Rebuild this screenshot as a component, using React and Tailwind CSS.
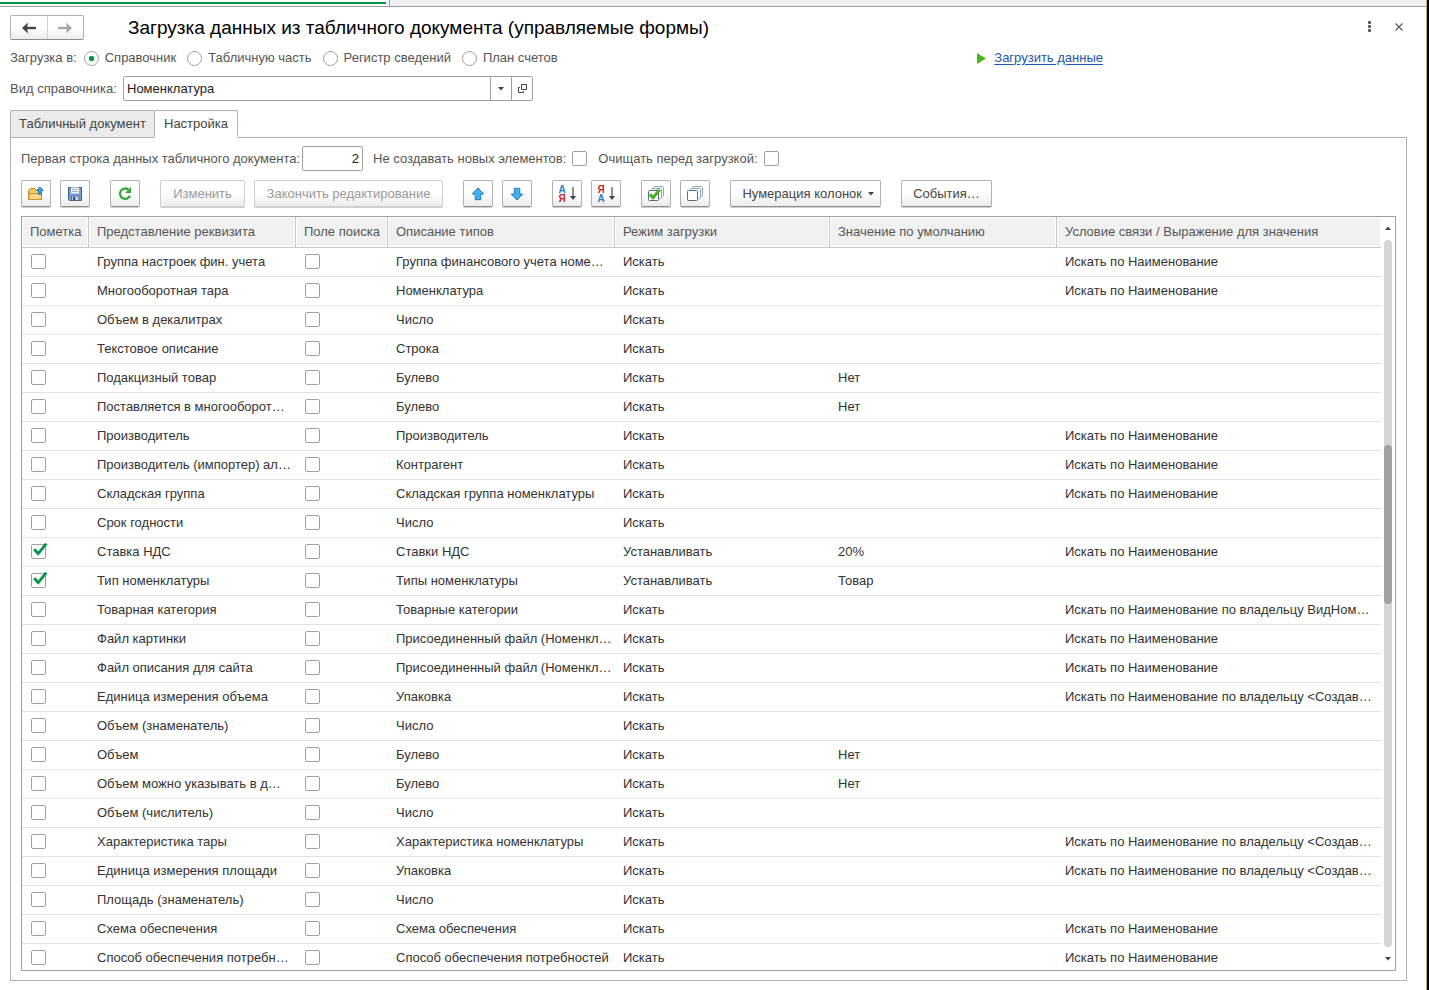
import clsx from 'clsx'

const TARGETS = ['Справочник', 'Табличную часть', 'Регистр сведений', 'План счетов']

const BY_NAME = 'Искать по Наименование'

const ROWS = [
  { name: 'Группа настроек фин. учета', type: 'Группа финансового учета номе…', mode: 'Искать', rule: BY_NAME },
  { name: 'Многооборотная тара', type: 'Номенклатура', mode: 'Искать', rule: BY_NAME },
  { name: 'Объем в декалитрах', type: 'Число', mode: 'Искать' },
  { name: 'Текстовое описание', type: 'Строка', mode: 'Искать' },
  { name: 'Подакцизный товар', type: 'Булево', mode: 'Искать', value: 'Нет' },
  { name: 'Поставляется в многооборот…', type: 'Булево', mode: 'Искать', value: 'Нет' },
  { name: 'Производитель', type: 'Производитель', mode: 'Искать', rule: BY_NAME },
  { name: 'Производитель (импортер) ал…', type: 'Контрагент', mode: 'Искать', rule: BY_NAME },
  { name: 'Складская группа', type: 'Складская группа номенклатуры', mode: 'Искать', rule: BY_NAME },
  { name: 'Срок годности', type: 'Число', mode: 'Искать' },
  { name: 'Ставка НДС', type: 'Ставки НДС', mode: 'Устанавливать', value: '20%', rule: BY_NAME, marked: true },
  { name: 'Тип номенклатуры', type: 'Типы номенклатуры', mode: 'Устанавливать', value: 'Товар', marked: true },
  { name: 'Товарная категория', type: 'Товарные категории', mode: 'Искать', rule: 'Искать по Наименование по владельцу ВидНом…' },
  { name: 'Файл картинки', type: 'Присоединенный файл (Номенкл…', mode: 'Искать', rule: BY_NAME },
  { name: 'Файл описания для сайта', type: 'Присоединенный файл (Номенкл…', mode: 'Искать', rule: BY_NAME },
  { name: 'Единица измерения объема', type: 'Упаковка', mode: 'Искать', rule: 'Искать по Наименование по владельцу <Создав…' },
  { name: 'Объем (знаменатель)', type: 'Число', mode: 'Искать' },
  { name: 'Объем', type: 'Булево', mode: 'Искать', value: 'Нет' },
  { name: 'Объем можно указывать в д…', type: 'Булево', mode: 'Искать', value: 'Нет' },
  { name: 'Объем (числитель)', type: 'Число', mode: 'Искать' },
  { name: 'Характеристика тары', type: 'Характеристика номенклатуры', mode: 'Искать', rule: 'Искать по Наименование по владельцу <Создав…' },
  { name: 'Единица измерения площади', type: 'Упаковка', mode: 'Искать', rule: 'Искать по Наименование по владельцу <Создав…' },
  { name: 'Площадь (знаменатель)', type: 'Число', mode: 'Искать' },
  { name: 'Схема обеспечения', type: 'Схема обеспечения', mode: 'Искать', rule: BY_NAME },
  { name: 'Способ обеспечения потребн…', type: 'Способ обеспечения потребностей', mode: 'Искать', rule: BY_NAME },
]

const COLUMNS = [
  { title: 'Пометка', width: 'w-[67px]' },
  { title: 'Представление реквизита', width: 'w-[207px]' },
  { title: 'Поле поиска', width: 'w-[92px]' },
  { title: 'Описание типов', width: 'w-[227px]' },
  { title: 'Режим загрузки', width: 'w-[215px]' },
  { title: 'Значение по умолчанию', width: 'w-[227px]' },
  { title: 'Условие связи / Выражение для значения', width: '' },
]

function Checkbox({ className, ...props }) {
  return (
    <span className={clsx('relative block size-[15px] shrink-0', className)}>
      <input
        type="checkbox"
        className="peer block size-[15px] appearance-none rounded-xs border border-[#a0a0a0] bg-white"
        {...props}
      />
      <svg
        viewBox="0 0 17 17"
        className="pointer-events-none absolute -top-0.5 left-0 hidden size-[17px] peer-checked:block"
      >
        <path d="M3.2 7.2L7.2 11.6L15.3 1.6" fill="none" stroke="#009646" strokeWidth="2.8" />
      </svg>
    </span>
  )
}

function ToolButton({ label, className, children }) {
  return (
    <button
      type="button"
      aria-label={label}
      className={clsx(
        'flex h-[27px] w-[30px] shrink-0 items-center justify-center rounded-xs border border-[#b0b0b0] border-b-[#8f8f8f] bg-linear-to-b from-white from-50% to-[#ebebeb] shadow-[0_1px_0_#d0d0d0]',
        className
      )}
    >
      {children}
    </button>
  )
}

function TextButton({ className, children, ...props }) {
  return (
    <button
      type="button"
      className={clsx(
        'flex h-[27px] shrink-0 items-center whitespace-nowrap rounded-xs border border-[#b0b0b0] border-b-[#8f8f8f] bg-linear-to-b from-white from-50% to-[#ebebeb] text-[#444] shadow-[0_1px_0_#d0d0d0] disabled:border-[#cfcfcf] disabled:text-[#999]',
        className
      )}
      {...props}
    >
      {children}
    </button>
  )
}

function FolderIcon() {
  return (
    <svg width="16" height="16" viewBox="0 0 16 16">
      <path d="M.5 13.5V5L2.5 2.5H7L8.5 4.5H13.5V13.5Z" fill="#f6c860" stroke="#b8822c" />
      <path d="M1 7.5H13.5V13.5H1Z" fill="#fbd987" stroke="#c98f35" />
      <path d="M12 .8L15.4 4.6H13.4V8.5H10.6V4.6H8.6Z" fill="#35a5e5" stroke="#1f6da8" strokeWidth=".8" />
    </svg>
  )
}

function SaveIcon() {
  return (
    <svg width="16" height="16" viewBox="0 0 16 16">
      <path d="M1.5 1.5H14.5V14.5H2.5L1.5 13.5Z" fill="#6f9fd4" stroke="#3f628c" />
      <path d="M4 1.5H12V7.5H4Z" fill="#f4f7fa" />
      <path d="M5 3.5H11M5 5.5H11" stroke="#9ab0c6" />
      <path d="M4.5 10H12V14.5H4.5Z" fill="#c9d3dc" stroke="#3f628c" strokeWidth=".8" />
      <path d="M6 11H8.2V14H6Z" fill="#35506f" />
    </svg>
  )
}

function RefreshIcon() {
  return (
    <svg width="16" height="16" viewBox="0 0 16 16">
      <path d="M11.4 3.6A5.2 5.2 0 1 0 13 9.8" fill="none" stroke="#35a83c" strokeWidth="2.3" />
      <path d="M14 1V7H8Z" fill="#35a83c" />
    </svg>
  )
}

function BlueArrow({ down }) {
  return (
    <svg width="14" height="14" viewBox="0 0 14 14" className={down ? 'rotate-180' : ''}>
      <path d="M7 1L12.8 7H9.8V12.7H4.2V7H1.2Z" fill="#42b0f0" stroke="#2b7cae" strokeLinejoin="round" />
    </svg>
  )
}

function SortIcon({ reverse }) {
  return (
    <span className="flex items-center gap-1">
      <span className="flex flex-col text-[10px] leading-[9px] font-bold">
        <span className={reverse ? 'text-[#c02a2f]' : 'text-[#2d7fc0]'}>{reverse ? 'Я' : 'А'}</span>
        <span className={reverse ? 'text-[#2d7fc0]' : 'text-[#c02a2f]'}>{reverse ? 'А' : 'Я'}</span>
      </span>
      <svg width="6" height="14" viewBox="0 0 6 14">
        <path d="M3 0V10" stroke="#444" strokeWidth="1.2" />
        <path d="M0 9H6L3 13Z" fill="#444" />
      </svg>
    </span>
  )
}

function StackIcon({ checked }) {
  return (
    <svg width="16" height="16" viewBox="0 0 16 16">
      <g fill="#fff" stroke="#8fa5b8">
        <rect x="5.5" y=".5" width="10" height="10" rx="1" />
        <rect x="3.5" y="2.5" width="10" height="10" rx="1" />
        <rect x=".5" y="4.5" width="10" height="10" rx="1" stroke="#4d6f8f" />
      </g>
      {checked && (
        <path d="M1.8 8.3L5 11.8L11.8 3.8" fill="none" stroke="#4cae1f" strokeWidth="3" />
      )}
    </svg>
  )
}

function NavArrow({ forward }) {
  return (
    <svg width="14" height="12" viewBox="0 0 14 12" className={forward ? 'rotate-180 text-[#a8a8a8]' : 'text-[#444]'}>
      <path d="M3 6H14" stroke="currentColor" strokeWidth="2.4" />
      <path d="M0 6L6 .5L5 6L6 11.5Z" fill="currentColor" />
    </svg>
  )
}

function Caret({ up }) {
  return (
    <svg width="6" height="4" viewBox="0 0 6 4" className={clsx('shrink-0', up && 'rotate-180')}>
      <path d="M0 0H6L3 3.5Z" fill="#444" />
    </svg>
  )
}

function TitleBar() {
  return (
    <header className="flex h-[25px] items-center">
      <div className="flex h-[25px] w-[74px] rounded-xs border border-[#b0b0b0] border-b-[#8f8f8f] bg-linear-to-b from-white from-50% to-[#ebebeb]">
        <button type="button" aria-label="Назад" className="flex flex-1 items-center justify-center border-r border-[#d0d0d0]">
          <NavArrow />
        </button>
        <button type="button" aria-label="Вперед" className="flex flex-1 items-center justify-center">
          <NavArrow forward />
        </button>
      </div>
      <h1 className="ml-11 whitespace-nowrap text-[19px] leading-6 text-black">
        Загрузка данных из табличного документа (управляемые формы)
      </h1>
      <div className="mr-1 mb-0.5 ml-auto flex items-center gap-[22px]">
        <button type="button" aria-label="Еще" className="flex w-2 justify-center">
          <svg width="3" height="11" viewBox="0 0 3 11" fill="#555">
            <rect width="3" height="3" rx="1" />
            <rect y="4" width="3" height="3" rx="1" />
            <rect y="8" width="3" height="3" rx="1" />
          </svg>
        </button>
        <button type="button" aria-label="Закрыть" className="flex w-2 justify-center">
          <svg width="8" height="8" viewBox="0 0 8 8" className="shrink-0">
            <path d="M.5 .5L7.5 7.5M7.5 .5L.5 7.5" stroke="#555" strokeWidth="1.1" />
          </svg>
        </button>
      </div>
    </header>
  )
}

function TargetPicker() {
  return (
    <div className="mt-[7px] flex h-[22px] items-center">
      <fieldset className="flex flex-1 items-center">
        <legend className="float-left mr-[7px]">Загрузка в:</legend>
        <div className="flex items-center gap-[11px]">
          {TARGETS.map((target, i) => (
            <label key={target} className="flex items-center gap-1.5 whitespace-nowrap">
              <input
                type="radio"
                name="target"
                defaultChecked={i === 0}
                className="size-[15px] appearance-none rounded-full border border-[#a0a0a0] bg-white checked:bg-[radial-gradient(circle,#009646_2.5px,transparent_3px)]"
              />
              {target}
            </label>
          ))}
        </div>
      </fieldset>
      <a href="#load" className="mr-[304px] flex items-center gap-2 whitespace-nowrap text-[#1c55ae]">
        <svg width="9" height="11" viewBox="0 0 9 11">
          <path d="M0 0L9 5.5L0 11Z" fill="#4db81c" />
        </svg>
        <span className="underline underline-offset-2">Загрузить данные</span>
      </a>
    </div>
  )
}

function CatalogField() {
  return (
    <div className="mt-[7px] flex h-[25px] items-center">
      <label htmlFor="catalog" className="w-[113px] whitespace-nowrap">Вид справочника:</label>
      <div className="flex h-[25px] w-[410px] rounded-xs border border-[#a0a0a0] bg-white">
        <input id="catalog" defaultValue="Номенклатура" className="min-w-0 flex-1 px-[3px] text-[#222] outline-none" />
        <button type="button" aria-label="Выбрать" className="flex w-[21px] items-center justify-center border-l border-[#a0a0a0]">
          <Caret />
        </button>
        <button type="button" aria-label="Открыть" className="flex w-[21px] items-center justify-center border-l border-[#a0a0a0]">
          <svg width="9" height="9" viewBox="0 0 9 9" fill="none" stroke="#444" className="shrink-0">
            <path d="M3.5 .5H8.5V5.5H3.5Z" />
            <path d="M2 3.5H.5V8.5H5.5V7" />
          </svg>
        </button>
      </div>
    </div>
  )
}

function Tabs() {
  return (
    <div role="tablist" className="relative z-10 -mb-px mt-[9px] flex h-7">
      <button type="button" role="tab" aria-selected="false" className="w-[145px] rounded-t-xs border border-[#b0b0b0] bg-[#ebebeb] text-[#444]">
        Табличный документ
      </button>
      <button type="button" role="tab" aria-selected="true" className="-ml-px w-[84px] rounded-t-xs border border-[#b0b0b0] border-b-white bg-white text-[#444]">
        Настройка
      </button>
    </div>
  )
}

function Options() {
  return (
    <div className="flex h-[25px] items-center whitespace-nowrap">
      <label htmlFor="first-row" className="w-[281px]">Первая строка данных табличного документа:</label>
      <input
        id="first-row"
        defaultValue="2"
        className="h-[25px] w-[61px] rounded-xs border border-[#a0a0a0] px-[3px] text-right text-[#222] outline-none"
      />
      <label className="ml-2.5 flex items-center gap-1.5">
        Не создавать новых элементов:
        <Checkbox />
      </label>
      <label className="ml-[11px] flex items-center gap-1.5">
        Очищать перед загрузкой:
        <Checkbox />
      </label>
    </div>
  )
}

function Toolbar() {
  return (
    <div className="mt-[9px] flex items-center gap-5">
      <div className="flex gap-[9px]">
        <ToolButton label="Открыть настройки"><FolderIcon /></ToolButton>
        <ToolButton label="Сохранить настройки"><SaveIcon /></ToolButton>
      </div>
      <ToolButton label="Обновить"><RefreshIcon /></ToolButton>
      <div className="flex gap-[9px]">
        <TextButton disabled className="w-[85px] justify-center">Изменить</TextButton>
        <TextButton disabled className="w-[189px] justify-center">Закончить редактирование</TextButton>
      </div>
      <div className="flex gap-[9px]">
        <ToolButton label="Переместить вверх"><BlueArrow /></ToolButton>
        <ToolButton label="Переместить вниз"><BlueArrow down /></ToolButton>
      </div>
      <div className="flex gap-[9px]">
        <ToolButton label="Сортировать по возрастанию"><SortIcon /></ToolButton>
        <ToolButton label="Сортировать по убыванию"><SortIcon reverse /></ToolButton>
      </div>
      <div className="flex gap-[9px]">
        <ToolButton label="Установить флажки"><StackIcon checked /></ToolButton>
        <ToolButton label="Снять флажки"><StackIcon /></ToolButton>
      </div>
      <TextButton className="w-[151px] justify-end gap-1.5 pr-1.5">
        Нумерация колонок
        <Caret />
      </TextButton>
      <TextButton className="w-[91px] justify-center">События…</TextButton>
    </div>
  )
}

function AttributeTable() {
  return (
    <table className="w-full table-fixed border-separate border-spacing-0 text-[#333]">
      <thead>
        <tr className="h-[31px] text-left text-[#555]">
          {COLUMNS.map((col) => (
            <th
              key={col.title}
              className={clsx(
                'overflow-hidden whitespace-nowrap border-r border-b border-[#c8c8c8] bg-[#f1f1f1] p-0 pl-2 font-normal shadow-[inset_0_0_0_1px_#fff] last:border-r-0',
                col.width
              )}
            >
              {col.title}
            </th>
          ))}
        </tr>
      </thead>
      <tbody>
        {ROWS.map((row) => (
          <tr key={row.name} className="h-[29px] *:overflow-hidden *:whitespace-nowrap *:border-b *:border-[#e2e2e2] *:p-0 *:pl-2">
            <td>
              <Checkbox aria-label={`Пометка: ${row.name}`} defaultChecked={row.marked} className="mb-0.5 ml-px" />
            </td>
            <td>{row.name}</td>
            <td>
              <Checkbox aria-label={`Поле поиска: ${row.name}`} className="mb-0.5 ml-px" />
            </td>
            <td>{row.type}</td>
            <td>{row.mode}</td>
            <td>{row.value}</td>
            <td>{row.rule}</td>
          </tr>
        ))}
      </tbody>
    </table>
  )
}

function ScrollBar() {
  return (
    <div className="flex w-[14px] shrink-0 flex-col items-center py-[9px]">
      <Caret up />
      <div className="my-2.5 flex w-2 flex-1 flex-col rounded-full bg-[#d6d6d6]">
        <div className="grow-205" />
        <div className="grow-158 rounded-full bg-[#a0a0a0]" />
        <div className="grow-343" />
      </div>
      <Caret />
    </div>
  )
}

export default function App() {
  return (
    <div className="flex h-screen border-r-2 border-black bg-white font-['Liberation_Sans',Arial,sans-serif] text-[13px] leading-4 text-[#555]">
      <div className="flex min-w-0 flex-1 flex-col border-r border-[#c8b45a]">
        {/* Window tabs strip */}
        <div className="flex h-[7px] shrink-0 border-b border-[#a0a0a0]">
          <div className="mb-0.5 w-[386px] border-b-2 border-[#009646]" />
          <div className="ml-[3px] flex-1 border-l border-[#a0a0a0] bg-[#f0f0f0]" />
        </div>

        <main className="flex min-h-0 flex-1 flex-col pt-2 pr-[19px] pb-[9px] pl-2.5">
          <TitleBar />
          <TargetPicker />
          <CatalogField />
          <Tabs />
          <section className="flex min-h-0 flex-1 flex-col border border-[#b0b0b0] px-2.5 pt-2 pb-[9px]">
            <Options />
            <Toolbar />
            <div className="mt-[9px] flex min-h-0 flex-1 overflow-hidden border border-[#a0a0a0]">
              <div className="min-w-0 flex-1 overflow-hidden">
                <AttributeTable />
              </div>
              <ScrollBar />
            </div>
          </section>
        </main>
      </div>
    </div>
  )
}
